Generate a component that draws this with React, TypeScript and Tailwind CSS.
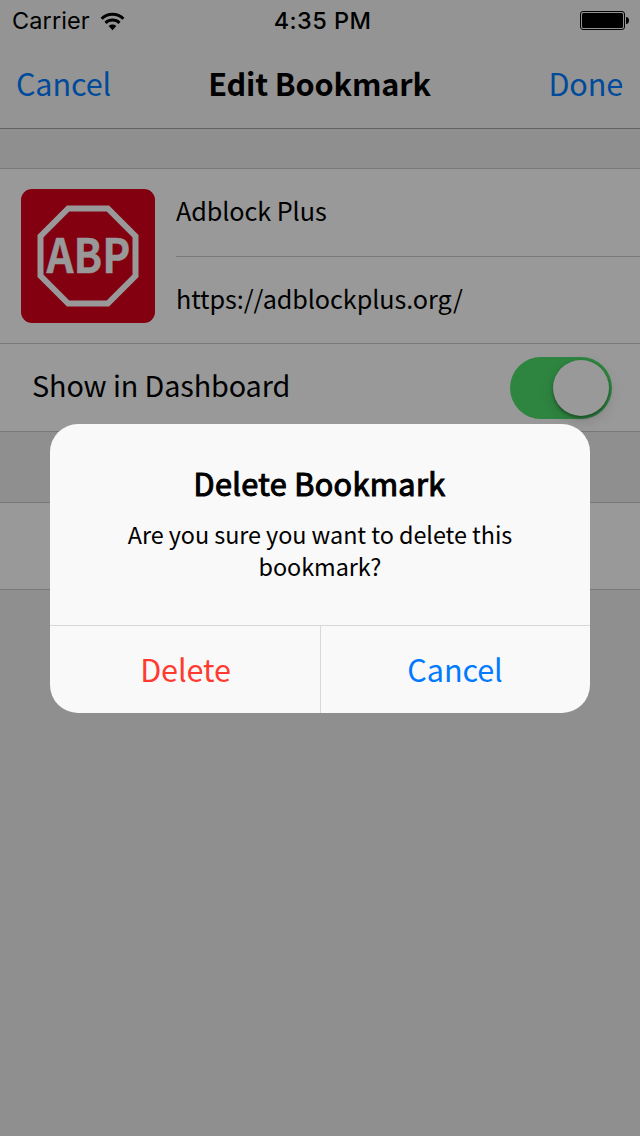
function StatusBar() {
  return (
    <div className="flex h-10 items-center pl-[12px] pr-[11px] pt-px font-['Inter',sans-serif] text-[23.5px] leading-[40px] text-black">
      <div className="flex flex-1 items-center">
        <span className="w-[78px] tracking-[0.1px]">Carrier</span>
        <svg className="ml-[10px]" width="26" height="20" viewBox="0 0 26 20">
          <path d="M12.5 19.2 L8.7 15 A5.6 5.6 0 0 1 16.3 15 Z" fill="#000" />
          <path d="M5.5 11.9 A10.2 10.2 0 0 1 19.5 11.9" fill="none" stroke="#000" strokeWidth="3" />
          <path d="M1.6 7.8 A15.6 15.6 0 0 1 23.4 7.8" fill="none" stroke="#000" strokeWidth="3" />
        </svg>
      </div>
      <span className="pl-[4px] font-medium tracking-[0.45px]">4:35 PM</span>
      <div className="flex flex-1 justify-end">
        <svg width="49" height="19" viewBox="0 0 49 19">
          <rect x="0.5" y="0.5" width="44" height="18" rx="2.5" fill="none" stroke="#000" />
          <rect x="2" y="2" width="41" height="15" rx="1.5" fill="#000" />
          <path d="M46 6 C48 6 49 7.5 49 9.5 C49 11.5 48 13 46 13 Z" fill="#000" />
        </svg>
      </div>
    </div>
  );
}

function BookmarkIcon() {
  return (
    <svg width="134" height="134" viewBox="0 0 134 134">
      <rect width="134" height="134" rx="11" fill="#830010" />
      <path
        d="M47.2 19.5 H86.8 L114.5 47.2 V86.8 L86.8 114.5 H47.2 L19.5 86.8 V47.2 Z"
        fill="none"
        stroke="#999"
        strokeWidth="6"
      />
      <text
        x="25.5"
        y="84"
        fill="#999"
        fontSize="47.5"
        textLength="84"
        lengthAdjust="spacingAndGlyphs"
        stroke="#999"
        strokeWidth="0.4"
        className="font-['Noto_Sans_CJK_SC',sans-serif] font-bold"
      >
        ABP
      </text>
    </svg>
  );
}

function Toggle() {
  return (
    <div className="flex h-[62px] w-[102px] items-center justify-end rounded-full bg-[#2e8540] pr-[3px]">
      <div className="h-[56px] w-[56px] rounded-full bg-[#999] shadow-[0_5px_14px_rgba(0,0,0,0.15),0_2px_3px_rgba(0,0,0,0.35)]" />
    </div>
  );
}

function DeleteDialog() {
  return (
    <div className="absolute left-[50px] top-[424px] flex h-[289px] w-[540px] flex-col overflow-hidden rounded-[28px] bg-[#f9f9f9]">
      <div className="flex h-[201px] flex-col items-center pt-[39px] text-center">
        <h2 className="pr-px text-[30.6px] font-normal leading-[40px] tracking-[0.35px] text-black [-webkit-text-stroke:1.1px_black]">
          Delete Bookmark
        </h2>
        <p className="mt-[15px] w-[420px] text-[23.4px] leading-[32px] tracking-[-0.06px] text-black">
          Are you sure you want to delete this bookmark?
        </p>
      </div>
      <div className="grid flex-1 grid-cols-2 border-t border-[#d8d8da] text-[30.6px] leading-[82px]">
        <button className="pb-px pl-px tracking-[-0.1px] text-[#ff3b30]">Delete</button>
        <button className="border-l border-[#d8d8da] pb-px pr-px tracking-[-0.1px] text-[#007aff]">Cancel</button>
      </div>
    </div>
  );
}

export default function App() {
  return (
    <div className="relative h-[1136px] w-[640px] overflow-hidden bg-[#8f8f8f] font-['Noto_Sans_CJK_SC',sans-serif] text-black">
      <header className="h-[129px] border-b border-[#636363] bg-[#949494]">
        <StatusBar />
        <div className="grid h-[86px] grid-cols-[1fr_auto_1fr] items-center px-4 text-[30.6px] leading-[86px] text-[#004a9b]">
          <button className="justify-self-start tracking-[-0.15px]">Cancel</button>
          <h1 className="pr-px font-bold tracking-[-0.12px] text-black">Edit Bookmark</h1>
          <button className="justify-self-end pr-px tracking-[-0.15px]">Done</button>
        </div>
      </header>
      <main className="pt-[39px]">
        <section className="border-y border-[#787878] bg-[#999]">
          <div className="flex h-[174px] items-center pl-[21px]">
            <BookmarkIcon />
            <div className="ml-[21px] flex flex-1 flex-col text-[25.2px] tracking-[-0.07px]">
              <div className="h-[88px] border-b border-[#787878] leading-[83px]">Adblock Plus</div>
              <div className="h-[86px] leading-[82px]">https://adblockplus.org/</div>
            </div>
          </div>
          <div className="flex h-[88px] items-center justify-between border-t border-[#787878] pl-8 pr-7">
            <span className="pb-[5px] text-[28.8px] leading-[82px] tracking-[-0.12px]">Show in Dashboard</span>
            <Toggle />
          </div>
        </section>
        <section className="mt-[70px] h-[88px] border-y border-[#787878] bg-[#999]" />
      </main>
      <DeleteDialog />
    </div>
  );
}
